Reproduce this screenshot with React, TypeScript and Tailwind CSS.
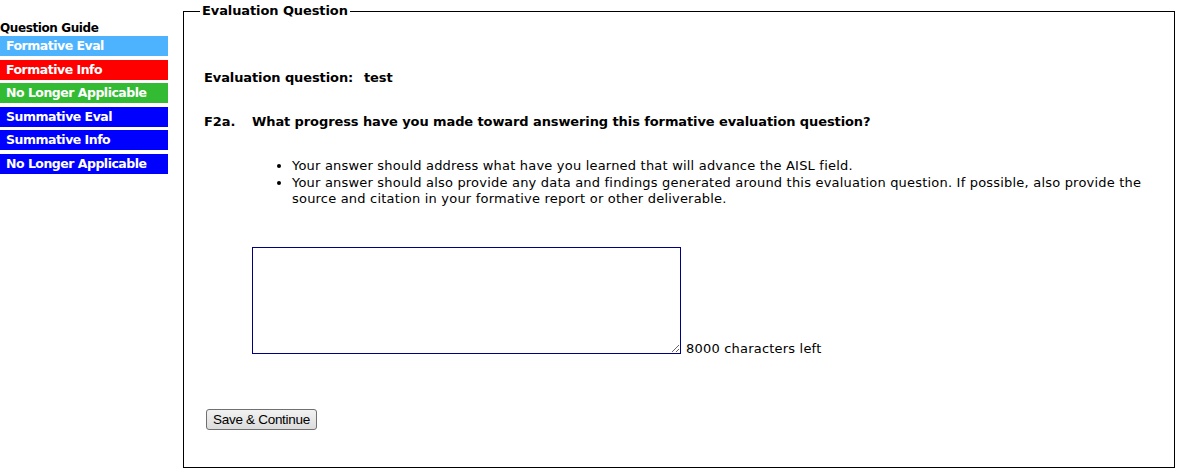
import { useState } from "react";

const guideItems = [
  { label: "Formative Eval", color: "bg-[#4db3ff]" },
  { label: "Formative Info", color: "bg-[#ff0000]" },
  { label: "No Longer Applicable", color: "bg-[#33bb33]" },
  { label: "Summative Eval", color: "bg-[#0000ff]" },
  { label: "Summative Info", color: "bg-[#0000ff]" },
  { label: "No Longer Applicable", color: "bg-[#0000ff]" },
];

const font = "font-['Verdana','DejaVu_Sans',sans-serif]";

function QuestionGuide() {
  return (
    <div className="w-[168px] shrink-0 pt-[21px]">
      <div className="text-[12px] leading-[14px] font-bold tracking-[-0.4px] text-black">Question Guide</div>
      <div className="mt-[1px] flex flex-col gap-[3.5px]">
        {guideItems.map((item, i) => (
          <div
            key={i}
            className={`${item.color} h-[20px] pl-[6px] text-[12.5px] leading-[20px] font-bold tracking-[-0.5px] text-white`}
          >
            {item.label}
          </div>
        ))}
      </div>
    </div>
  );
}

export default function App() {
  const [text, setText] = useState("");
  const left = 8000 - text.length;

  return (
    <div className={`flex w-[1177px] h-[471px] bg-white text-black ${font}`}>
      <QuestionGuide />

      <fieldset className="ml-[15px] mt-[3px] w-[992px] h-[465px] border border-black">
        <legend className="ml-[16px] px-[2px] text-[13px] leading-[16px] font-bold tracking-[-0.1px]">
          Evaluation Question
        </legend>

        <div className="pl-[20px] pr-[20px] text-[13px]">
          <div className="mt-[51px] leading-[16px] font-bold tracking-[-0.1px]">
            <span className="inline-block w-[160px]">Evaluation question:</span>
            test
          </div>

          <div className="mt-[28px] flex leading-[16px] font-bold tracking-[-0.1px]">
            <span className="w-[48px] shrink-0">F2a.</span>
            <span>What progress have you made toward answering this formative evaluation question?</span>
          </div>

          <div className="ml-[48px]">
            <ul className="mt-[28px] list-disc pl-[40px] pr-[12px] leading-[16.5px] tracking-[0.2px]">
              <li>Your answer should address what have you learned that will advance the AISL field.</li>
              <li>
                Your answer should also provide any data and findings generated around this evaluation question. If
                possible, also provide the source and citation in your formative report or other deliverable.
              </li>
            </ul>

            <div className="mt-[39px] flex items-end gap-[5px]">
              <textarea
                value={text}
                onChange={(e) => setText(e.target.value)}
                maxLength={8000}
                className="w-[429px] h-[107px] border border-[#000080] bg-white outline-none"
              />
              <span className="text-[13px] leading-[14px] -mb-[2px] tracking-[0.2px]">{left} characters left</span>
            </div>
          </div>

          <button
            type="button"
            className="mt-[55px] ml-[2px] h-[21px] w-[111px] rounded-[3px] border border-[#707070] bg-gradient-to-b from-[#f2f2f2] to-[#dcdcdc] text-[13.5px] leading-[19px] tracking-[-0.3px] font-['Liberation_Sans',Arial,sans-serif]"
          >
            Save &amp; Continue
          </button>
        </div>
      </fieldset>
    </div>
  );
}
